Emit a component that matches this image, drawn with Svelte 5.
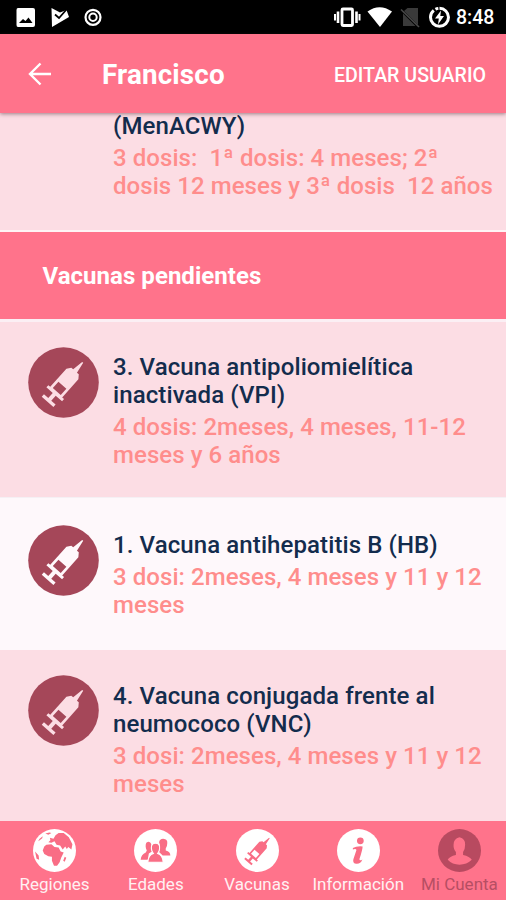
<script>
  const pending = [
    { title: '3. Vacuna antipoliomielítica\ninactivada (VPI)', doses: '4 dosis: 2meses, 4 meses, 11-12\nmeses y 6 años', size: 'tall' },
    { title: '1. Vacuna antihepatitis B (HB)', doses: '3 dosi: 2meses, 4 meses y 11 y 12\nmeses', size: 'short' },
    { title: '4. Vacuna conjugada frente al\nneumococo (VNC)', doses: '3 dosi: 2meses, 4 meses y 11 y 12\nmeses', size: 'last' }
  ];
  const tabs = [
    { id: 'regions', label: 'Regiones' },
    { id: 'ages', label: 'Edades' },
    { id: 'vaccines', label: 'Vacunas' },
    { id: 'info', label: 'Información' },
    { id: 'account', label: 'Mi Cuenta' }
  ];
</script>

{#snippet syringe()}
  <g transform="translate(54.7 15.4) rotate(41.7)" fill-rule="evenodd">
    <path d="M-.7 0H.7L2.500 11.500H5L8 15.500V39.800H10.500V42.800H2V49.500H7.800V52.800H-7.800V49.500H-2V42.800H-10.500V39.800H-8V15.500L-5 11.500H-2.500ZM-5.300 30.500V39H5.300V30.500Z" />
  </g>
{/snippet}

<div class="screen">
  <div class="status">
    <svg class="picture" width="20" height="34" viewBox="0 0 20 34">
      <path fill="#fff" fill-rule="evenodd" d="M2 8H17Q19 8 19 10V25Q19 27 17 27H2Q.500 27 .500 25V10Q.500 8 2 8ZM3 23H16.500L12.500 17.500L9.500 21L7 19Z" />
    </svg>
    <svg class="play" width="19" height="34" viewBox="0 0 19 34">
      <path fill="#fff" d="M.500 8L9 12.500L15.500 10L18 17L1 27Z" />
      <path d="M4 14.500L8 18L15.500 9.500" fill="none" stroke="#000" stroke-width="1.800" />
    </svg>
    <svg class="record" width="18" height="34" viewBox="0 0 18 34">
      <circle cx="9" cy="17.300" r="7.500" fill="none" stroke="#fff" stroke-width="2.200" />
      <circle cx="9" cy="17.300" r="3.700" fill="none" stroke="#fff" stroke-width="2" />
    </svg>
    <svg class="right" width="122" height="34" viewBox="0 0 122 34">
      <g fill="none" stroke="#fff">
        <rect x="9" y="9" width="10.500" height="16.500" rx="1" stroke-width="2.800" />
        <path d="M5 11.500V23M23.500 11.500V23" stroke-width="2.600" />
        <path d="M2 14V20.500M26.500 14V20.500" stroke-width="2" />
      </g>
      <path d="M34.500 11.500Q46.500 3 59 11.500L47 27Z" fill="#fff" />
      <path d="M74.500 8H85V25L71 11ZM70 13.500L82.500 26H70Z" fill="#3a3a3a" />
      <path d="M68 9.500L86 27" stroke="#484848" stroke-width="1.600" />
      <circle cx="106.500" cy="17.300" r="9" fill="none" stroke="#fff" stroke-width="3" stroke-dasharray="50 2 3 1.500" transform="rotate(-90 106.500 17.300)" />
      <path d="M108 10.500L102 18.500H105.800L105 24.500L111 16H107.300Z" fill="#fff" />
    </svg>
    <span class="clock">8:48</span>
  </div>

  <header>
    <svg class="back" width="24" height="24" viewBox="0 0 24 24">
      <path d="M23 12H2M12.500 1.500L2 12L12.500 22.500" fill="none" stroke="#fff" stroke-width="2.400" />
    </svg>
    <h1>Francisco</h1>
    <span class="edit">EDITAR USUARIO</span>
  </header>

  <main>
    <div class="row given">
      <div class="copy">
        <p class="title">(MenACWY)</p>
        <p class="doses">{'3 dosis:  1ª dosis: 4 meses; 2ª\ndosis 12 meses y 3ª dosis  12 años'}</p>
      </div>
    </div>
    <h2><span>Vacunas pendientes</span></h2>
    {#each pending as item}
      <div class="row {item.size}">
        <svg class="badge" width="71" height="71" viewBox="0 0 71 71">
          <circle cx="35.500" cy="35.500" r="35.300" fill="#a54759" />
          {@render syringe()}
        </svg>
        <div class="copy">
          <p class="title">{item.title}</p>
          <p class="doses">{item.doses}</p>
        </div>
      </div>
    {/each}
  </main>

  <nav>
    {#each tabs as tab}
      <div class="tab" class:active={tab.id === 'account'}>
        <svg width="43" height="43" viewBox="0 0 42 42">
          <circle class="disc" cx="21" cy="21" r="21" />
          <g class="glyph">
            {#if tab.id === 'regions'}
              <path d="M11 17L13 15.500L18 15L21 17.500L25 18L27 22L30 23L27.500 28L26 32.500L23.500 36H20.500L18.500 31L18.500 27L15 26.500L11 24.500L9.500 21Z" />
              <path d="M15 13L17 11L16.500 8.500L20 9.500L22 6L25 4L30 4L35 8L38.500 15L37.500 20L34.500 17.500L33 19.500L31.500 17L29 20L26.500 16L23 15.500L21 12L18 13.500Z" />
              <path d="M2 22L5.500 26L6 30L3.500 29ZM5 12L6.500 9.500L9.500 7L9 9L6.500 11ZM12 4.500L16 3.300L18 4L15 5.500ZM31 27L32.500 28L31 32L29.500 31Z" />
            {:else if tab.id === 'ages'}
              <path d="M12 13.500Q15.500 11 17 15Q16.500 17 16.500 20L17.500 22L14.500 24L13.500 30H6.500Q7 25 11.500 23L12.500 21Q10.500 17 12 13.500Z" />
              <path d="M24.500 13Q25 9.500 28.500 9.500Q33 9.800 32.500 14Q32.500 17 31 19L31 21Q35.500 22 35.500 26H28L24.500 22.500Q26.500 18 24.500 13Z" />
              <path d="M21 14Q25.500 14 25 19Q24.700 22 23 24Q28 25.500 28.500 32.500H13.500Q14 25.500 19 24Q17.300 22 17 19Q16.500 14 21 14Z" stroke="#fff" stroke-width="1" />
            {:else if tab.id === 'vaccines'}
              <g transform="translate(-.2 -.5) scale(.6)">{@render syringe()}</g>
            {:else if tab.id === 'info'}
              <circle cx="22.800" cy="11.500" r="3.300" />
              <path d="M15.500 18.500Q19 16.500 25 17Q25 20 22 29Q21.500 31.800 24.800 29.800Q23 34.300 19 34Q15 33.500 16 29.500L19 20.500Q18.500 18.800 15.500 20Z" />
            {:else}
              <path d="M21 8Q27 9.500 26.500 15.500Q26.500 20 24.500 22.500V25.500Q31 27 33 30Q28 34.800 21 34.800Q14 34.800 9.500 30Q11 27 17.500 25.500V22.500Q15 20 15.200 15.500Q15 9.500 21 8Z" />
            {/if}
          </g>
        </svg>
        <span>{tab.label}</span>
      </div>
    {/each}
  </nav>
</div>

<style>
  :global(body) { margin: 0; }
  .screen { width: 506px; height: 900px; display: flex; flex-direction: column; overflow: hidden; font-family: Roboto, "Liberation Sans", sans-serif; background: #fef8fb; }
  .status { height: 34px; flex: none; background: #000; display: flex; align-items: center; color: #fff; }
  .status svg { flex: none; }
  .picture { margin-left: 16px; }
  .play { margin-left: 15px; }
  .record { margin-left: 14px; }
  .right { margin-left: 231px; }
  .clock { font-size: 19.500px; font-weight: 500; margin-left: 1px; line-height: 34px; padding-top: 2px; }
  header { height: 79px; flex: none; box-sizing: border-box; padding: 0 20px 0 28px; display: flex; align-items: center; background: #ff738b; color: #fff; box-shadow: 0 1px 4px rgba(60, 30, 40, .5); z-index: 1; }
  h1 { margin: 3px 0 0 50px; font-size: 27.800px; line-height: 32px; font-weight: 700; letter-spacing: .15px; }
  .edit { margin: 3px 0 0 auto; font-size: 19.600px; font-weight: 500; }
  main { flex: 1; min-height: 0; overflow: hidden; }
  .row { box-sizing: border-box; display: flex; background: #fcdde4; }
  .given { height: 117px; padding-left: 113px; }
  .given .copy { margin-top: -1px; }
  .badge { flex: none; margin: 25px 14px 0 28px; fill: #fcdde4; }
  .tall { height: 176px; border-bottom: 1px solid #f5f0f4; }
  .short { height: 152px; background: #fef8fb; }
  .short .badge { margin-top: 27px; fill: #fff8fb; }
  .last { height: 171px; }
  .copy { padding-top: 31px; }
  .last .copy { padding-top: 32px; }
  .given .copy { padding-top: 0; }
  .short .copy { padding-top: 33px; }
  p { margin: 0; font-size: 24px; line-height: 28px; font-weight: 500; white-space: pre; letter-spacing: .1px; }
  .title { color: #132c4d; }
  .doses { color: #ff8d8c; margin-top: 4px; letter-spacing: .06px; }
  h2 { margin: 0; height: 92px; box-sizing: border-box; border-top: 2px solid #fff4f5; border-bottom: 3px solid #fbeff4; padding: 1px 0 0 42.500px; display: flex; align-items: center; background: #ff738b; color: #fff; font-size: 24px; line-height: 28px; letter-spacing: .04px; }
  nav { height: 79px; flex: none; display: flex; background: #ff738b; }
  .tab { flex: 1 1 0; min-width: 0; padding: 8px 0 0 8px; box-sizing: border-box; display: flex; flex-direction: column; align-items: center; color: #fff0f2; white-space: nowrap; font-size: 17px; line-height: 20px; }
  .tab span { margin-top: 2px; }
  .disc { fill: #fff; }
  .glyph { fill: #f96d85; }
  .active { color: #b64e63; }
  .active .disc { fill: #b84a60; }
  .active .glyph { fill: #ff738b; }
</style>
